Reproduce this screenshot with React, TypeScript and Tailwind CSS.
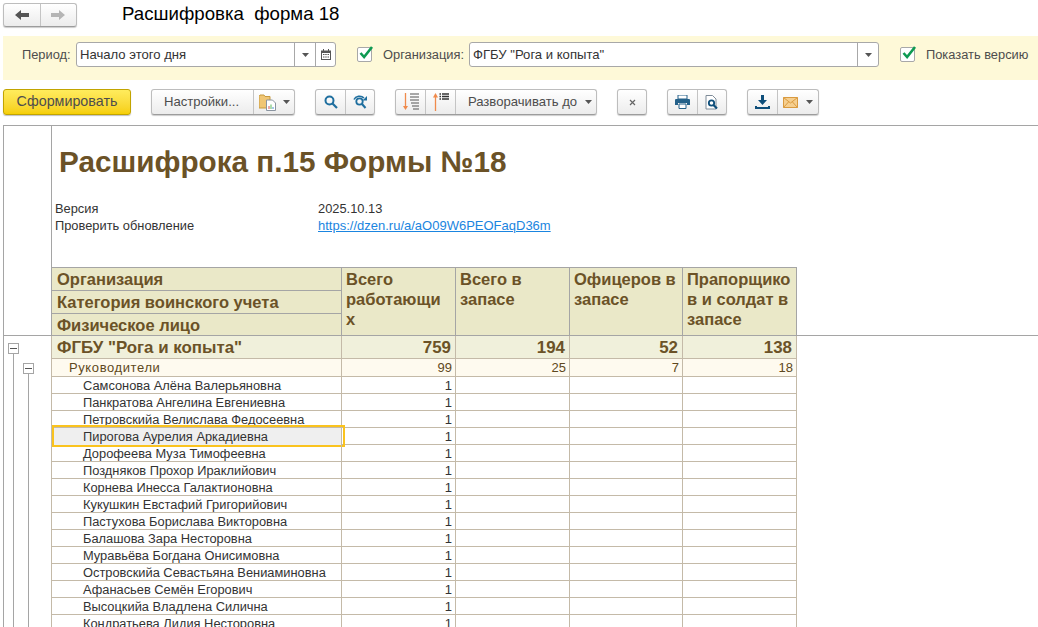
import React from "react";

const cols = "grid grid-cols-[290px_114px_114px_113px_114px] w-[745px]";

const people = [
  "Самсонова Алёна Валерьяновна",
  "Панкратова Ангелина Евгениевна",
  "Петровскийа Велислава Федосеевна",
  "Пирогова Аурелия Аркадиевна",
  "Дорофеева Муза Тимофеевна",
  "Поздняков Прохор Ираклийович",
  "Корнева Инесса Галактионовна",
  "Кукушкин Евстафий Григорийович",
  "Пастухова Борислава Викторовна",
  "Балашова Зара Несторовна",
  "Муравьёва Богдана Онисимовна",
  "Островскийа Севастьяна Вениаминовна",
  "Афанасьев Семён Егорович",
  "Высоцкийа Владлена Силична",
  "Кондратьева Лидия Несторовна",
];

const Caret = () => (
  <svg width="7" height="4" viewBox="0 0 7 4" className="shrink-0">
    <path d="M0 0h7L3.5 4z" fill="#555" />
  </svg>
);

const Btn = ({ className = "", children }: { className?: string; children?: React.ReactNode }) => (
  <div className={`flex items-center justify-center h-full border-r border-[#c4c4c4] last:border-r-0 ${className}`}>
    {children}
  </div>
);

const Group = ({ className = "", children }: { className?: string; children: React.ReactNode }) => (
  <div className={`flex h-[26px] rounded-[3px] border border-[#bdbdbd] border-b-[#9c9c9c] bg-gradient-to-b from-white to-[#ececec] shadow-[0_1px_1px_rgba(0,0,0,0.2)] ${className}`}>
    {children}
  </div>
);

const Check = () => (
  <div className="relative w-[15px] h-[15px] shrink-0 rounded-[2px] border border-[#a8a8a8] bg-white">
    <svg width="16" height="15" viewBox="0 0 16 15" className="absolute left-[0px] top-[-3px]">
      <path d="M2.5 8l3.6 4L14 2" fill="none" stroke="#0e9a52" strokeWidth="2.6" />
    </svg>
  </div>
);

const Tree = () => (
  <div className="relative flex justify-center items-center w-[11px] h-[11px] border border-[#a5a5a5] bg-white shrink-0">
    <div className="w-[7px] h-px bg-[#555]" />
  </div>
);

export default function App() {
  return (
    <div className="w-[1038px] h-[627px] overflow-hidden flex flex-col bg-white font-['Liberation_Sans',sans-serif] text-[12.85px] text-[#333]">
      {/* title bar */}
      <div className="flex items-center h-[36px] pl-[3px] pb-[7px] shrink-0">
        <div className="flex w-[74px] h-[24px] rounded-[3px] border border-[#bdbdbd] border-b-[#9c9c9c] bg-gradient-to-b from-white to-[#ececec] shadow-[0_1px_1px_rgba(0,0,0,0.2)]">
          <Btn className="w-[37px]">
            <svg width="14" height="10" viewBox="0 0 14 10">
              <path d="M6 0v3h8v4H6v3L0 5z" fill="#555" />
            </svg>
          </Btn>
          <Btn className="w-[36px]">
            <svg width="14" height="10" viewBox="0 0 14 10">
              <path d="M8 0v3H0v4h8v3l6-5z" fill="#b5b5b5" />
            </svg>
          </Btn>
        </div>
        <div className="ml-[45px] text-[18.67px] text-black whitespace-pre leading-none">Расшифровка  форма 18</div>
      </div>

      {/* filters */}
      <div className="flex items-center h-[44px] ml-[3px] pl-[19px] pb-[7px] bg-[#fef9d8] shrink-0 text-[#4d4d4d]">
        <span className="w-[54px]">Период:</span>
        <div className="flex items-center w-[260px] h-[25px] rounded-[3px] border border-[#a8a8a8] bg-white text-[#333] text-[13.1px]">
          <span className="flex-1 pl-[3px]">Начало этого дня</span>
          <div className="flex items-center justify-center w-[21px] h-full border-l border-[#a8a8a8]">
            <Caret />
          </div>
          <div className="flex items-center justify-center w-[20px] h-full border-l border-[#a8a8a8]">
            <svg width="10" height="11" viewBox="0 0 10 11">
              <path d="M0 1.5h10v9.5H0z" fill="#555" />
              <path d="M1 4h8v6H1z" fill="#fff" />
              <path d="M2 5h1.500v1H2zM4.200 5h1.500v1H4.200zM6.500 5H8v1H6.500zM2 7.500h1.500v1H2zM4.200 7.500h1.500v1H4.200zM6.500 7.500H8v1H6.500z" fill="#555" />
              <path d="M2 0h1v2H2zM7 0h1v2H7z" fill="#555" />
            </svg>
          </div>
        </div>
        <div className="ml-[21px]"><Check /></div>
        <span className="ml-[11px] w-[86px]">Организация:</span>
        <div className="flex items-center w-[410px] h-[25px] rounded-[3px] border border-[#a8a8a8] bg-white text-[#333] text-[13.1px]">
          <span className="flex-1 pl-[3px]">ФГБУ "Рога и копыта"</span>
          <div className="flex items-center justify-center w-[21px] h-full border-l border-[#a8a8a8]">
            <Caret />
          </div>
        </div>
        <div className="ml-[21px]"><Check /></div>
        <span className="ml-[11px] whitespace-nowrap">Показать версию</span>
      </div>

      {/* toolbar */}
      <div className="flex items-center h-[45px] pl-[3px] pb-[1px] shrink-0 text-[#4d4d4d] text-[13.1px]">
        <div className="flex items-center justify-center w-[128px] h-[26px] rounded-[3px] border border-[#c2a400] bg-gradient-to-b from-[#ffec5c] to-[#f6cf00] shadow-[0_1px_1px_rgba(0,0,0,0.25)] text-[14.3px]">
          Сформировать
        </div>
        <Group className="ml-[20px] w-[144px]">
          <Btn className="w-[102px] pr-[2px]">Настройки...</Btn>
          <Btn className="flex-1 gap-[6px]">
            <svg width="18" height="17" viewBox="0 0 18 17">
              <path d="M0 2.500L1 1h4l1 1.500h5V14H0z" fill="#f0c674" stroke="#c79a3f" />
              <path d="M7.500 6h6l3 3v7.500h-9z" fill="#fff" stroke="#8a94a0" />
              <path d="M9.500 12h1v3h-1z" fill="#d9534f" />
              <path d="M11.500 10.500h1V15h-1z" fill="#5cb85c" />
              <path d="M13.500 13h1v2h-1z" fill="#4a90d9" />
            </svg>
            <Caret />
          </Btn>
        </Group>
        <Group className="ml-[20px] w-[60px]">
          <Btn className="w-[30px]">
            <svg width="14" height="14" viewBox="0 0 14 14">
              <circle cx="5.500" cy="5.500" r="4" fill="none" stroke="#1f6f9f" strokeWidth="2" />
              <path d="M8.500 8.500l4.500 4.500" stroke="#1f6f9f" strokeWidth="2.200" />
            </svg>
          </Btn>
          <Btn className="flex-1">
            <svg width="15" height="14" viewBox="0 0 15 14">
              <circle cx="6.500" cy="6.500" r="3.200" fill="none" stroke="#1f6f9f" strokeWidth="1.800" />
              <path d="M9 9l3.500 4" stroke="#1f6f9f" strokeWidth="2" />
              <path d="M1 4.500C2.500 1 8 0 11 3" fill="none" stroke="#1f6f9f" strokeWidth="1.500" />
              <path d="M14 1v4.500H9.500z" fill="#1f6f9f" />
            </svg>
          </Btn>
        </Group>
        <Group className="ml-[20px] w-[202px]">
          <Btn className="w-[30px]">
            <svg width="16" height="18" viewBox="0 0 16 18">
              <path d="M2.500 0v15" stroke="#f08a4b" strokeWidth="1.300" />
              <path d="M0 13h5l-2.500 4z" fill="#f08a4b" />
              <path d="M7 1h9M7 4h9M7 7h9M8 10h8M9 13h7M10 16h6" stroke="#555" strokeWidth="1" />
            </svg>
          </Btn>
          <Btn className="w-[30px]">
            <svg width="16" height="18" viewBox="0 0 16 18">
              <path d="M2.500 3v15" stroke="#f08a4b" strokeWidth="1.300" />
              <path d="M0 4.500h5L2.500 0z" fill="#f08a4b" />
              <path d="M6.500 1h1.500M6.500 3.500h1.500M6.500 6h1.500" stroke="#333" strokeWidth="1.300" />
              <path d="M9 1h7M9 3.500h7M9 6h7" stroke="#333" strokeWidth="1.300" />
            </svg>
          </Btn>
          <Btn className="flex-1 gap-[8px] pl-[8px]">
            <span>Разворачивать до</span>
            <Caret />
          </Btn>
        </Group>
        <Group className="ml-[20px] w-[30px]">
          <Btn className="w-full">
            <svg width="7" height="7" viewBox="0 0 7 7">
              <path d="M1 1l5 5M6 1l-5 5" stroke="#666" strokeWidth="1.200" />
            </svg>
          </Btn>
        </Group>
        <Group className="ml-[20px] w-[60px]">
          <Btn className="w-[30px]">
            <svg width="15" height="14" viewBox="0 0 15 14">
              <path d="M3 0h9v4H3z" fill="#fff" stroke="#24618a" />
              <path d="M1 4h13a1 1 0 0 1 1 1v5h-3v-2H3v2H0V5a1 1 0 0 1 1-1z" fill="#24618a" />
              <path d="M4 9h7v4.500H4z" fill="#fff" stroke="#24618a" />
            </svg>
          </Btn>
          <Btn className="flex-1">
            <svg width="14" height="15" viewBox="0 0 14 15">
              <path d="M1 .5h6.500L11 4v10H1z" fill="#fff" stroke="#7f8c99" />
              <circle cx="6.500" cy="8" r="2.700" fill="none" stroke="#0f4f7b" strokeWidth="1.800" />
              <path d="M8.500 10l3.500 3.500" stroke="#0f4f7b" strokeWidth="2.200" />
            </svg>
          </Btn>
        </Group>
        <Group className="ml-[20px] w-[72px]">
          <Btn className="w-[30px]">
            <svg width="15" height="14" viewBox="0 0 15 14">
              <path d="M6 0h3v5h3l-4.500 5L3 5h3z" fill="#0f4f7b" />
              <path d="M0 11h2v1h11v-1h2v3H0z" fill="#0f4f7b" />
            </svg>
          </Btn>
          <Btn className="flex-1 gap-[8px]">
            <svg width="15" height="11" viewBox="0 0 15 11">
              <path d="M.500.500h14v10H.500z" fill="#f6cf8f" stroke="#d99a3f" />
              <path d="M.500.500l7 5.500 7-5.500M.500 10.500l5-5.500M14.500 10.500l-5-5.500" fill="none" stroke="#d99a3f" />
            </svg>
            <Caret />
          </Btn>
        </Group>
      </div>

      {/* report */}
      <div className="flex-1 min-h-0 overflow-hidden ml-[3px] border-l border-t border-[#a5a5a5]">
        <div className="flex h-[141px]">
          <div className="w-[48px] shrink-0 border-r border-[#a5a5a5]" />
          <div className="flex-1">
            <div className="pl-[7px] pt-[19px] h-[70px] text-[29.7px] leading-[34px] font-bold text-[#6b5227]">
              Расшифрока п.15 Формы №18
            </div>
            <div className="flex pl-[3px] h-[17px] leading-[17px] mt-[4px]">
              <span className="w-[263px]">Версия</span>
              <span>2025.10.13</span>
            </div>
            <div className="flex pl-[3px] h-[17px] leading-[17px]">
              <span className="w-[263px]">Проверить обновление</span>
              <a className="text-[#1a85e0] underline text-[13px]">https://dzen.ru/a/aO09W6PEOFaqD36m</a>
            </div>
          </div>
        </div>

        <div className="flex h-[69px] border-b border-[#a5a5a5]">
          <div className="w-[48px] shrink-0 border-r border-[#a5a5a5]" />
          <div className={`${cols} border-t border-[#a5a5a5] h-[68px] bg-[#eae8c8] text-[#6b5227] font-bold text-[16.5px]`}>
            <div className="flex flex-col border-r border-[#a5a5a5]">
              <div className="h-[23px] leading-[22px] pl-[5px] border-b border-[#a5a5a5]">Организация</div>
              <div className="h-[23px] leading-[22px] pl-[5px] border-b border-[#a5a5a5]">Категория воинского учета</div>
              <div className="h-[21px] leading-[22px] pl-[5px]">Физическое лицо</div>
            </div>
            {["Всего работающи х", "Всего в запасе", "Офицеров в запасе", "Прапорщико в и солдат в запасе"].map((h) => (
              <div key={h} className="border-r border-[#a5a5a5] pl-[4px] pr-[3px] pt-[1px] leading-[20px]">
                {h}
              </div>
            ))}
          </div>
        </div>

        <div className="flex h-[292px] overflow-hidden">
          <div className="flex w-[48px] shrink-0 pl-[2px] border-r border-[#c4baa8]">
            <div className="flex flex-col items-center w-[15px] pt-[7px]">
              <Tree />
              <div className="w-px flex-1 bg-[#a5a5a5]" />
            </div>
            <div className="flex flex-col items-center w-[15px] pt-[27px]">
              <Tree />
              <div className="w-px flex-1 bg-[#a5a5a5]" />
            </div>
          </div>
          <div className="w-[745px]">
            <div className={`${cols} h-[23px] bg-[#f0f0db] text-[#6b5227] font-bold text-[16.9px] leading-[23px] border-b border-[#c4baa8]`}>
              <div className="pl-[5px] border-r border-[#c4baa8]">ФГБУ "Рога и копыта"</div>
              {["759", "194", "52", "138"].map((v) => (
                <div key={v} className="text-right pr-[4px] border-r border-[#c4baa8]">{v}</div>
              ))}
            </div>
            <div className={`${cols} h-[18px] bg-[#fefaef] text-[#5e4820] text-[13px] leading-[17px] border-b border-[#c4baa8]`}>
              <div className="pl-[17px] tracking-[0.6px] border-r border-[#c4baa8]">Руководители</div>
              {["99", "25", "7", "18"].map((v) => (
                <div key={v} className="text-right pr-[3px] border-r border-[#c4baa8]">{v}</div>
              ))}
            </div>
            {people.map((name, i) => (
              <div key={name} className={`${cols} h-[17px] leading-[17px] border-b border-[#c4baa8]`}>
                <div className={`relative pl-[31px] border-r border-[#c4baa8] whitespace-nowrap ${i === 3 ? "bg-[#efefef]" : ""}`}>
                  {i === 3 && <div className="absolute left-0 top-[-3px] w-[293px] h-[22px] border-2 border-[#fac31e]" />}
                  {name}
                </div>
                <div className="text-right pr-[3px] border-r border-[#c4baa8] text-[13px]">1</div>
                <div className="border-r border-[#c4baa8]" />
                <div className="border-r border-[#c4baa8]" />
                <div className="border-r border-[#c4baa8]" />
              </div>
            ))}
          </div>
        </div>
      </div>
    </div>
  );
}
